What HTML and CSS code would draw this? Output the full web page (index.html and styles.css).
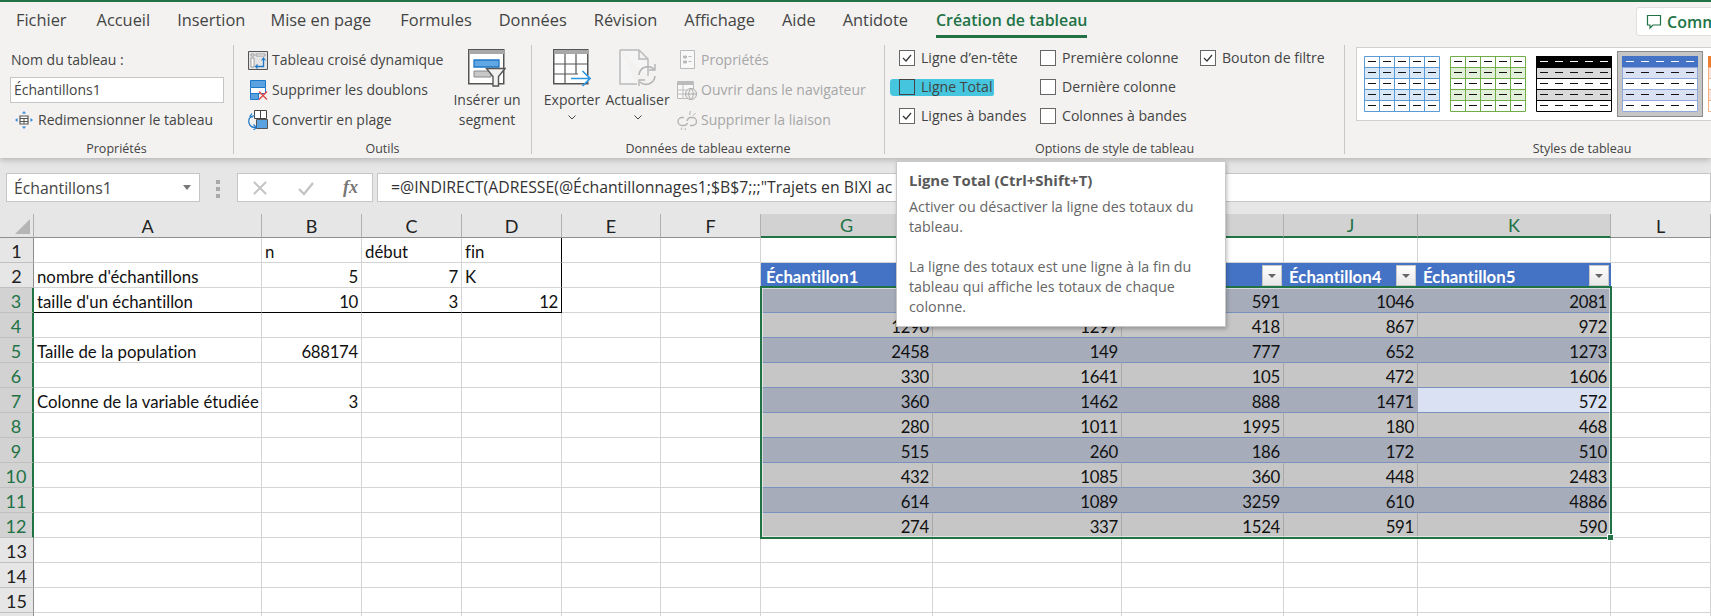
FILE: index.html
```html
<!DOCTYPE html>
<html lang="fr">
<head>
<meta charset="utf-8">
<title>Création de tableau</title>
<link rel="stylesheet" href="styles.css">
</head>
<body>
<div class="app">
<header class="head">
  <nav class="tabs">
    <span class="tab t-fichier">Fichier</span>
    <span class="tab">Accueil</span>
    <span class="tab t-insert">Insertion</span>
    <span class="tab t-page">Mise en page</span>
    <span class="tab">Formules</span>
    <span class="tab">Données</span>
    <span class="tab">Révision</span>
    <span class="tab">Affichage</span>
    <span class="tab">Aide</span>
    <span class="tab t-anti">Antidote</span>
    <span class="tab active">Création de tableau</span>
    <span class="comments">
      <svg class="comment-ic" viewBox="0 0 16 16" width="16" height="16"><path d="M1.5 1.5h13v9.5H7l-3 3v-3H1.5z" fill="none" stroke="#217346" stroke-width="1.2"/></svg>
      <span>Commentaires</span>
    </span>
  </nav>
  <div class="ribbon">
    <section class="group g-prop">
      <div class="content col">
        <div class="row"><span>Nom du tableau :</span></div>
        <div class="row"><div class="name-input">Échantillons1</div></div>
        <div class="row resize">
          <svg class="ic" viewBox="0 0 20 20" width="20" height="20"><path d="M6 6h8v8H6z" fill="#fff" stroke="#555" stroke-width="1.2"/><path d="M6 8.5h8M6 11.5h8M10 8.5V14" stroke="#555"/><path d="M10 1l2 2.5H8zM10 19l-2-2.500h4zM1 10l2.500-2v4zM19 10l-2.500 2V8z" fill="#2b88d8"/></svg>
          <span>Redimensionner le tableau</span>
        </div>
      </div>
      <div class="label">Propriétés</div>
    </section>
    <section class="group g-tools">
      <div class="content">
        <div class="col list">
          <div class="row">
            <svg class="ic" viewBox="0 0 20 20" width="20" height="20"><path d="M.5 1.500h19v18H.5z" fill="#e4e4e4" stroke="#555"/><path d="M3 4h3v2H3zM8 4h9v2H8z" fill="#fff" stroke="#888" stroke-width=".8"/><path d="M3 8h3v9H3z" fill="#fff" stroke="#888" stroke-width=".8"/><path d="M8 16.500h7.500V9" fill="none" stroke="#1e78c8" stroke-width="1.300"/><path d="M13.500 10.500l2-2.500 2 2.500M9.500 14.500l-2 2 2 2" fill="none" stroke="#1e78c8" stroke-width="1.100"/></svg>
            <span>Tableau croisé dynamique</span>
          </div>
          <div class="row">
            <svg class="ic" viewBox="0 0 20 20" width="20" height="20"><path d="M2.500 .5h15v7h-15z" fill="#5ba3e0" stroke="#1e78c8"/><path d="M2.500 7.500h15v6h-15z" fill="#fff" stroke="#1e78c8"/><path d="M2.500 13.500h8v6h-8z" fill="#5ba3e0" stroke="#1e78c8"/><path d="M11 11.500l8 8M19 11.500l-8 8" stroke="#e04a4a" stroke-width="1.400"/></svg>
            <span>Supprimer les doublons</span>
          </div>
          <div class="row">
            <svg class="ic" viewBox="0 0 20 20" width="20" height="20"><path d="M6.500 .5h12v8h-12z" fill="#fff" stroke="#444"/><path d="M12.500 .5v8" stroke="#444"/><path d="M8.500 9.500h11v9h-11z" fill="#5ba3e0" stroke="#555"/><path d="M7 5.500C2 6 0 9 1 13c.7 3 3 4.500 6.500 4.500M5.500 14.500l3 3-3 2.500M4 3.500l-2 2.500 2.500 1.500" fill="none" stroke="#1e78c8" stroke-width="1.200"/></svg>
            <span>Convertir en plage</span>
          </div>
        </div>
        <div class="big b-segment">
          <svg viewBox="0 0 38 38" width="38" height="38"><path d="M.75.75h35v34h-35z" fill="#fff" stroke="#555" stroke-width="1.500"/><path d="M1 1h35v4H1z" fill="#a8a8a8"/><path d="M6 11h25v7H6z" fill="#62a6e3" stroke="#1e78c8" stroke-width="1.300"/><path d="M6 22h17v6H6z" fill="#c8c8c8" stroke="#888"/><path d="M18.500 19.500H37L30.500 27.500V37h-5.500V27.500z" fill="#f3f2f1" stroke="#555" stroke-width="1.400"/></svg>
          <div>Insérer un<br>segment</div>
        </div>
      </div>
      <div class="label">Outils</div>
    </section>
    <section class="group g-data">
      <div class="content">
        <div class="big b-export">
          <svg viewBox="0 0 38 38" width="38" height="38"><path d="M.75.75h34v34h-34z" fill="#fff" stroke="#555" stroke-width="1.500"/><path d="M1 1h34v4H1z" fill="#a8a8a8"/><path d="M12 5v30M23 5v20M1 15h34M1 25h24" stroke="#555" stroke-width="1.200"/><path d="M16 29.500h20" stroke="#fff" stroke-width="6"/><path d="M18 29.500h19M29.500 22l7.500 7.500-7.500 7.500" fill="none" stroke="#2b96e0" stroke-width="1.600"/></svg>
          <div>Exporter</div>
          <svg class="chev" viewBox="0 0 8 5" width="8" height="5"><path d="M.5.5L4 4 7.500.5" fill="none" stroke="#444"/></svg>
        </div>
        <div class="big b-refresh">
          <svg viewBox="0 0 38 38" width="38" height="38"><path d="M1 1h19l9 9v17M20 1v9h9M1 1v34h17" fill="#f5f5f5" stroke="#bbb" stroke-width="1.500"/><path d="M20 26a9 9 0 0 1 15-6M36 27a9 9 0 0 1-15 6" fill="none" stroke="#b4b4b4" stroke-width="1.600"/><path d="M36 15v6h-6M20 37v-6h6" fill="none" stroke="#b4b4b4" stroke-width="1.400"/></svg>
          <div>Actualiser</div>
          <svg class="chev" viewBox="0 0 8 5" width="8" height="5"><path d="M.5.5L4 4 7.500.5" fill="none" stroke="#444"/></svg>
        </div>
        <div class="col list-off">
          <div class="row">
            <svg class="ic" viewBox="0 0 20 20" width="20" height="20"><path d="M3.500 .5h14v18h-14z" fill="#f8f8f8" stroke="#bbb"/><path d="M6.500 6h3v2h-3zM6.500 11h3v2h-3zM11.500 6.500h3M11.500 11.500h3" fill="#bbb" stroke="#bbb"/></svg>
            <span>Propriétés</span>
          </div>
          <div class="row">
            <svg class="ic" viewBox="0 0 20 20" width="20" height="20"><path d="M.5 1.500h16v17H.5z" fill="#f8f8f8" stroke="#bbb"/><path d="M1 2h15v3H1z" fill="#bbb"/><path d="M6 5v13M1 10h10M1 14h7" stroke="#bbb"/><circle cx="14" cy="14" r="5.500" fill="#f3f2f1" stroke="#aaa"/><path d="M8.500 14h11M14 8.500c-3 3-3 8 0 11M14 8.500c3 3 3 8 0 11" fill="none" stroke="#aaa"/></svg>
            <span>Ouvrir dans le navigateur</span>
          </div>
          <div class="row">
            <svg class="ic" viewBox="0 0 20 20" width="20" height="20"><path d="M7 7.500H5a4 4 0 0 0 0 8h2c2 0 3-1 3.500-2.500M10 11c.5-2 2-3.500 4-3.500h1.500a4 4 0 0 1 0 8H13" fill="none" stroke="#b4b4b4" stroke-width="1.400"/><path d="M12.500 5l1-4M16 5.500l2.500-2.500M5 17.500l-1 2.500M8 18l.5 2" stroke="#b4b4b4"/></svg>
            <span>Supprimer la liaison</span>
          </div>
        </div>
      </div>
      <div class="label">Données de tableau externe</div>
    </section>
    <section class="group g-opts">
      <div class="content opts">
        <label class="opt"><span class="box"><svg viewBox="0 0 14 14" width="14" height="14"><path d="M3 7l3 3 5-6" fill="none" stroke="#333" stroke-width="1.200"/></svg></span>Ligne d’en-tête</label>
        <label class="opt"><span class="box"></span>Première colonne</label>
        <label class="opt"><span class="box"><svg viewBox="0 0 14 14" width="14" height="14"><path d="M3 7l3 3 5-6" fill="none" stroke="#333" stroke-width="1.200"/></svg></span>Bouton de filtre</label>
        <label class="opt marked"><span class="box clear"></span>Ligne Total</label>
        <label class="opt"><span class="box"></span>Dernière colonne</label>
        <span></span>
        <label class="opt"><span class="box"><svg viewBox="0 0 14 14" width="14" height="14"><path d="M3 7l3 3 5-6" fill="none" stroke="#333" stroke-width="1.200"/></svg></span>Lignes à bandes</label>
        <label class="opt"><span class="box"></span>Colonnes à bandes</label>
      </div>
      <div class="label">Options de style de tableau</div>
    </section>
    <section class="group g-styles">
      <div class="content">
        <div class="gallery">
          <svg class="thumb" viewBox="0 0 76 56" width="76" height="56"><path d="M0 11h76v11H0zM0 33h76v11H0z" fill="#d9e8f6"/><path d="M.5.5h75v55H.5zM.5 11.500h75M.5 22.500h75M.5 33.500h75M.5 44.500h75M15.500 0v56M30.500 0v56M45.500 0v56M60.500 0v56" fill="none" stroke="#5b9bd5"/><path class="dashes" d="M4 5.500h70M4 16.500h70M4 27.500h70M4 38.500h70M4 49.500h70"/></svg>
          <svg class="thumb" viewBox="0 0 76 56" width="76" height="56"><path d="M0 11h76v11H0zM0 33h76v11H0z" fill="#e2efd9"/><path d="M.5.5h75v55H.5zM.5 11.500h75M.5 22.500h75M.5 33.500h75M.5 44.500h75M15.500 0v56M30.500 0v56M45.500 0v56M60.500 0v56" fill="none" stroke="#70ad47"/><path class="dashes" d="M4 5.500h70M4 16.500h70M4 27.500h70M4 38.500h70M4 49.500h70"/></svg>
          <svg class="thumb" viewBox="0 0 76 56" width="76" height="56"><path d="M0 0h76v11H0z"/><path d="M0 11h76v11H0zM0 33h76v11H0z" fill="#d9d9d9"/><path d="M.5.5h75v55H.5zM.5 11.500h75M.5 22.500h75M.5 33.500h75M.5 44.500h75" fill="none" stroke="#000"/><path class="dashes light" d="M4 5.500h70"/><path class="dashes" d="M4 16.500h70M4 27.500h70M4 38.500h70M4 49.500h70"/></svg>
          <div class="thumb-on"><svg viewBox="0 0 76 56" width="76" height="56"><path d="M0 0h76v56H0z" fill="#fff"/><path d="M0 11h76v11H0zM0 33h76v11H0z" fill="#d9e1f2"/><path d="M.5.5h75v55H.5zM.5 22.500h75M.5 33.500h75M.5 44.500h75M.5 11.500h75" fill="none" stroke="#8eaadb"/><path d="M0 0h76v11H0z" fill="#4472c4"/><path class="dashes light" d="M4 5.500h70"/><path class="dashes" d="M4 16.500h70M4 27.500h70M4 38.500h70M4 49.500h70"/></svg></div>
          <svg class="thumb" viewBox="0 0 76 56" width="76" height="56"><path d="M0 11h76v11H0zM0 33h76v11H0z" fill="#fbe4d5"/><path d="M.5.5h75v55H.5zM.5 11.500h75M.5 22.500h75M.5 33.500h75M.5 44.500h75" fill="none" stroke="#f4b083"/><path d="M0 0h76v11H0z" fill="#ed7d31"/></svg>
        </div>
      </div>
      <div class="label">Styles de tableau</div>
    </section>
  </div>
</header>

<div class="fbar">
  <div class="namebox"><span>Échantillons1</span><i class="caret"></i></div>
  <div class="grip"><i></i><i></i><i></i></div>
  <div class="fxbox">
    <svg viewBox="0 0 16 16" width="16" height="16"><path d="M2 2l12 12M14 2L2 14" stroke="#c4c4c4" stroke-width="2"/></svg>
    <svg viewBox="0 0 16 16" width="16" height="16"><path d="M1 9l5 5L15 3" fill="none" stroke="#c4c4c4" stroke-width="2.400"/></svg>
    <span class="fx">fx</span>
  </div>
  <div class="formula">=@INDIRECT(ADRESSE(@Échantillonnages1;$B$7;;;"Trajets en BIXI ac</div>
</div>

<main class="sheet">
<table class="grid">
  <colgroup><col class="c0"><col class="ca"><col class="cb"><col class="cb"><col class="cb"><col class="ce"><col class="cb"><col class="cg"><col class="ch"><col class="ci"><col class="cj"><col class="ck"><col class="cb"></colgroup>
  <thead>
    <tr><th class="corner"><i></i></th><th>A</th><th>B</th><th>C</th><th>D</th><th>E</th><th>F</th><th class="sel">G</th><th class="sel">H</th><th class="sel">I</th><th class="sel">J</th><th class="sel">K</th><th>L</th></tr>
  </thead>
  <tbody>
    <tr><th>1</th><td></td><td>n</td><td>début</td><td class="br">fin</td><td></td><td></td><td></td><td></td><td></td><td></td><td></td><td></td></tr>
    <tr><th>2</th><td>nombre d'échantillons</td><td class="num">5</td><td class="num">7</td><td class="br">K</td><td></td><td></td><td class="hd">Échantillon1</td><td class="hd"></td><td class="hd"><i class="filter"></i></td><td class="hd">Échantillon4<i class="filter"></i></td><td class="hd">Échantillon5<i class="filter"></i></td><td></td></tr>
    <tr class="on"><th>3</th><td class="bb">taille d'un échantillon</td><td class="num bb">10</td><td class="num bb">3</td><td class="num bb br">12</td><td></td><td></td><td class="dk"></td><td class="dk"></td><td class="dk num">591</td><td class="dk num">1046</td><td class="dk num">2081</td><td></td></tr>
    <tr class="on"><th>4</th><td></td><td></td><td></td><td></td><td></td><td></td><td class="lt num">1290</td><td class="lt num">1297</td><td class="lt num">418</td><td class="lt num">867</td><td class="lt num">972</td><td></td></tr>
    <tr class="on"><th>5</th><td>Taille de la population</td><td class="num">688174</td><td></td><td></td><td></td><td></td><td class="dk num">2458</td><td class="dk num">149</td><td class="dk num">777</td><td class="dk num">652</td><td class="dk num">1273</td><td></td></tr>
    <tr class="on"><th>6</th><td></td><td></td><td></td><td></td><td></td><td></td><td class="lt num">330</td><td class="lt num">1641</td><td class="lt num">105</td><td class="lt num">472</td><td class="lt num">1606</td><td></td></tr>
    <tr class="on"><th>7</th><td>Colonne de la variable étudiée</td><td class="num">3</td><td></td><td></td><td></td><td></td><td class="dk num">360</td><td class="dk num">1462</td><td class="dk num">888</td><td class="dk num">1471</td><td class="act num">572</td><td></td></tr>
    <tr class="on"><th>8</th><td></td><td></td><td></td><td></td><td></td><td></td><td class="lt num">280</td><td class="lt num">1011</td><td class="lt num">1995</td><td class="lt num">180</td><td class="lt num">468</td><td></td></tr>
    <tr class="on"><th>9</th><td></td><td></td><td></td><td></td><td></td><td></td><td class="dk num">515</td><td class="dk num">260</td><td class="dk num">186</td><td class="dk num">172</td><td class="dk num">510</td><td></td></tr>
    <tr class="on"><th>10</th><td></td><td></td><td></td><td></td><td></td><td></td><td class="lt num">432</td><td class="lt num">1085</td><td class="lt num">360</td><td class="lt num">448</td><td class="lt num">2483</td><td></td></tr>
    <tr class="on"><th>11</th><td></td><td></td><td></td><td></td><td></td><td></td><td class="dk num">614</td><td class="dk num">1089</td><td class="dk num">3259</td><td class="dk num">610</td><td class="dk num">4886</td><td></td></tr>
    <tr class="on"><th>12</th><td></td><td></td><td></td><td></td><td></td><td></td><td class="lt num">274</td><td class="lt num">337</td><td class="lt num">1524</td><td class="lt num">591</td><td class="lt num">590</td><td></td></tr>
    <tr><th>13</th><td></td><td></td><td></td><td></td><td></td><td></td><td></td><td></td><td></td><td></td><td></td><td></td></tr>
    <tr><th>14</th><td></td><td></td><td></td><td></td><td></td><td></td><td></td><td></td><td></td><td></td><td></td><td></td></tr>
    <tr><th>15</th><td></td><td></td><td></td><td></td><td></td><td></td><td></td><td></td><td></td><td></td><td></td><td></td></tr>
    <tr><th></th><td></td><td></td><td></td><td></td><td></td><td></td><td></td><td></td><td></td><td></td><td></td><td></td></tr>
  </tbody>
</table>
<div class="selection"><i class="handle"></i></div>
</main>

<aside class="tooltip">
  <h2>Ligne Total (Ctrl+Shift+T)</h2>
  <p>Activer ou désactiver la ligne des totaux du tableau.</p>
  <p>La ligne des totaux est une ligne à la fin du tableau qui affiche les totaux de chaque colonne.</p>
</aside>
</div>
</body>
</html>
```
FILE: styles.css
```css
* { box-sizing: border-box; }
html, body { margin: 0; height: 100%; overflow: hidden; background: #fff; }
.app { position: relative; width: 1711px; height: 616px; overflow: hidden; font-family: "Open Sans", "Noto Sans", sans-serif; font-size: 14px; color: #444; }

.head { position: relative; z-index: 2; background: #f3f2f1; border-top: 2px solid #217346; box-shadow: 0 2px 6px rgba(0,0,0,.22); }
.tabs { display: flex; height: 43px; gap: 27px; padding-left: 16px; overflow: hidden; font-size: 16.4px; }
.tab { height: 36px; line-height: 36px; white-space: nowrap; color: #444; }
.t-fichier { margin-right: 3px; }
.t-insert { margin-right: -2px; }
.t-page { margin-right: 2px; }
.t-anti { margin-right: 1px; }
.tab.active { color: #217346; font-size: 15.9px; font-weight: 600; border-bottom: 3px solid #217346; }
.comments { display: flex; align-items: center; gap: 5px; flex: none; margin: 5px -60px 0 auto; width: 135px; height: 29px; padding-left: 9px; background: #fff; border: 1px solid #e1dfdd; border-radius: 3px; color: #217346; font-size: 16px; font-weight: 600; white-space: nowrap; }
.comment-ic { flex: none; }

.ribbon { display: flex; height: 113px; }
.group { flex: none; height: 109px; border-right: 1px solid #c8c6c4; }
.content { display: flex; height: 95px; }
.col { display: flex; flex-direction: column; }
.row { display: flex; align-items: center; height: 30px; white-space: nowrap; }
.row > span { margin-bottom: 2px; }
.ic { flex: none; margin-right: 4px; }
.label { height: 14px; line-height: 18px; text-align: center; font-size: 12.5px; white-space: nowrap; }

.g-prop { width: 234px; }
.g-prop .content { padding-left: 11px; }
.name-input { width: 214px; height: 26px; margin-left: -1px; padding-left: 3px; line-height: 24px; background: #fff; border: 1px solid #c8c6c4; }
.resize { margin-left: 3px; }

.g-tools { width: 298px; }
.g-tools .content { padding-left: 14px; }
.list { width: 205px; }
.big { flex: none; padding-top: 4px; text-align: center; line-height: 20px; white-space: nowrap; }
.big > svg:first-child { display: block; margin: 0 auto 3px; }
.b-segment { width: 68px; }

.g-data { width: 353px; }
.g-data .content { padding-left: 7px; }
.b-export { width: 66px; }
.b-refresh { width: 65px; }
.chev { display: block; margin: 5px auto 0; }
.list-off { margin-left: 7px; color: #a6a6a6; }

.g-opts { width: 460px; }
.opts { display: grid; grid-template-columns: 141px 160px 120px; grid-auto-rows: 29px; padding-left: 14px; margin-top: -2px; margin-bottom: 2px; font-size: 14.1px; }
.opt { position: relative; display: flex; align-items: center; gap: 6px; white-space: nowrap; }
.box { flex: none; display: flex; align-items: center; justify-content: center; width: 16px; height: 16px; background: #fff; border: 1px solid #666; }
.box.clear { background: transparent; border-color: #444; }
.marked::before { content: ""; position: absolute; left: -9px; top: 7px; width: 104px; height: 17px; background: #45c6de; border-radius: 3px 1px 2px 4px; z-index: -1; }
.marked { z-index: 0; }

.g-styles { width: 474px; border-right: 0; }
.g-styles .content { padding: 2px 0 0 11px; }
.gallery { display: flex; align-items: center; gap: 10px; width: 480px; height: 74px; padding-left: 7px; background: #fff; border: 1px solid #d2d0ce; }
.thumb { flex: none; }
.thumb-on { flex: none; display: flex; align-items: center; justify-content: center; width: 86px; height: 66px; margin: 0 -5px; background: #c6c6c6; border: 1px solid #8a8a8a; }
.dashes { fill: none; stroke: #111; stroke-dasharray: 8 7; }
.dashes.light { stroke: #fff; }

.fbar { display: flex; align-items: flex-start; height: 56px; padding-top: 15px; background: #e6e6e6; }
.namebox { display: flex; align-items: center; justify-content: space-between; width: 194px; height: 29px; margin-left: 6px; padding: 0 8px 0 7px; background: #fff; border: 1px solid #c6c6c6; font-size: 15.8px; }
.caret { width: 0; height: 0; border: 4px solid transparent; border-top: 5px solid #777; border-bottom: 0; }
.grip { display: flex; flex-direction: column; gap: 3px; width: 37px; padding: 7px 0 0 16px; }
.grip i { width: 4px; height: 4px; background: #aaa; }
.fxbox { display: flex; align-items: center; justify-content: space-between; width: 136px; height: 29px; padding: 0 14px 0 14px; background: #fff; border: 1px solid #c6c6c6; }
.fx { font-family: "Liberation Serif", serif; font-style: italic; font-weight: 700; font-size: 18px; color: #777; }
.formula { flex: 1; height: 29px; margin-left: 4px; padding-left: 13px; line-height: 27px; background: #fff; border: 1px solid #c6c6c6; font-size: 15.8px; color: #333; white-space: nowrap; overflow: hidden; }

.sheet { position: relative; }
.grid { table-layout: fixed; width: 1711px; border-collapse: separate; border-spacing: 0; font-family: Lato, "Open Sans", sans-serif; font-size: 16.8px; font-variant-ligatures: none; color: #111; }
.c0 { width: 34px; } .ca { width: 228px; } .cb { width: 100px; } .ce { width: 99px; } .cg { width: 172px; } .ch { width: 189px; } .ci { width: 162px; } .cj { width: 134px; } .ck { width: 193px; }
.grid th, .grid td { height: 25px; padding: 0; border-right: 1px solid #d4d4d4; border-bottom: 1px solid #d4d4d4; overflow: hidden; white-space: nowrap; }
.grid td { padding: 4px 3px 0; line-height: 20px; }
.grid th { font-weight: 400; background: #e6e6e6; color: #222; font-size: 18px; }
.grid thead th { height: 24px; border-right-color: #b0b0b0; border-bottom-color: #8e8e8e; }
.grid tbody th { padding-top: 2px; line-height: 22px; border-right-color: #8e8e8e; border-bottom-color: #c0c0c0; }
.grid thead th.sel { background: #d2d2d2; color: #217346; border-bottom: 2px solid #217346; }
.grid .on th { background: #d2d2d2; color: #217346; border-right: 2px solid #217346; }
.corner { position: relative; }
.corner i { position: absolute; right: 3px; bottom: 3px; border-style: solid; border-width: 0 0 15px 15px; border-color: transparent transparent #b5b5b5 transparent; }
.num { text-align: right; letter-spacing: -.3px; }
.grid .br { border-right-color: #000; }
.grid .bb { border-bottom-color: #000; }
.grid .hd { position: relative; padding-left: 5px; background: #4472c4; color: #fff; font-weight: 700; border-color: #4472c4; }
.filter { position: absolute; right: 1px; top: 2px; width: 20px; height: 21px; background: #f0f0f0 linear-gradient(#fff, #e8e8e8); border: 1px solid #c8c8c8; }
.filter::after { content: ""; position: absolute; left: 5px; top: 8px; border: 4px solid transparent; border-top: 4px solid #666; border-bottom: 0; }
.grid .dk { background: #a6acb9; border-right-color: #a6acb9; border-bottom-color: #7a90bd; }
.grid .lt { background: #c6c6c6; border-right-color: #a8a8a8; border-bottom-color: #7a90bd; }
.grid .act { background: #d9e1f2; border-right-color: #d9e1f2; border-bottom-color: #7a90bd; }

.selection { position: absolute; left: 760px; top: 72px; width: 852px; height: 253px; border: 2px solid #217346; box-shadow: inset 0 0 0 1px rgba(255,255,255,.55); pointer-events: none; }
.handle { position: absolute; right: -4px; bottom: -4px; box-sizing: content-box; width: 5px; height: 5px; background: #217346; border: 1px solid #fff; }

.tooltip { position: absolute; z-index: 3; left: 896px; top: 161px; width: 330px; height: 166px; padding: 8px 12px; background: #fff; border: 1px solid #c8c8c8; box-shadow: 1px 2px 4px rgba(0,0,0,.25); color: #666; font-size: 14.3px; line-height: 20px; }
.tooltip h2 { margin: 0 0 7px; font-size: 14.9px; font-weight: 700; color: #595959; }
.tooltip p { margin: 0 0 20px; }
```
